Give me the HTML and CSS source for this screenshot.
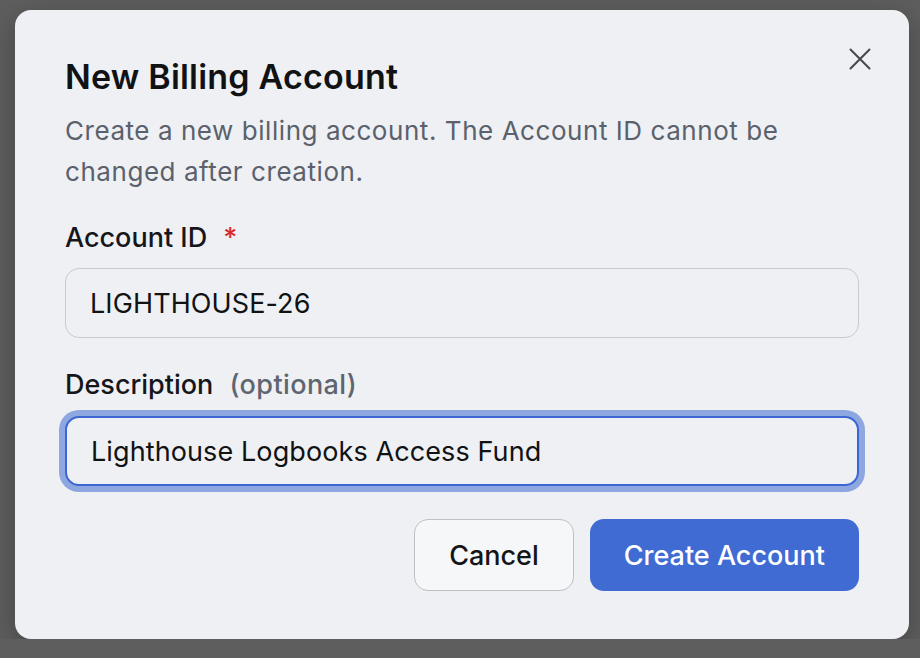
FILE: index.html
```html
<!DOCTYPE html>
<html>
<head>
    <link rel="stylesheet" href="styles.css">
</head>
<body>
    <div class="dialog">
        <button class="close-button" aria-label="Close">
            <svg width="22" height="22" viewBox="0 0 22 22">
                <path d="M1.5 1.5 L20.5 20.5 M20.5 1.5 L1.5 20.5" stroke="#474a4f" stroke-width="2.1" stroke-linecap="round" fill="none"/>
            </svg>
        </button>

        <div class="dialog-title">New Billing Account</div>
        <p class="dialog-text">Create a new billing account. The Account ID cannot be changed after creation.</p>

        <label class="field-label" for="accountId">Account ID <span class="required">*</span></label>
        <input id="accountId" class="field-input" type="text" value="LIGHTHOUSE-26">

        <label class="field-label label-gap" for="description">Description <span class="optional">(optional)</span></label>
        <input id="description" class="field-input focused" type="text" value="Lighthouse Logbooks Access Fund">

        <div class="dialog-actions">
            <button class="btn btn-cancel">Cancel</button>
            <button class="btn btn-primary">Create Account</button>
        </div>
    </div>
</body>
</html>
```

FILE: styles.css
```css
body {
    background-color: #5e5e5e;
    font-family: Inter, "Noto Sans", sans-serif;
    margin: 0;
    padding: 10px 11px 0 15px;
    overflow: hidden;
}

.dialog {
    position: relative;
    background-color: #eef0f3;
    border-radius: 16px;
    padding: 47px 50px 48px 50px;
    display: flex;
    flex-direction: column;
    box-shadow: 0 8px 28px rgba(0, 0, 0, 0.28);
}

.close-button {
    position: absolute;
    top: 38px;
    right: 38px;
    background: none;
    border: none;
    padding: 0;
    width: 22px;
    height: 22px;
    cursor: pointer;
}

.dialog-title {
    font-size: 34px;
    font-weight: 600;
    line-height: 40px;
    letter-spacing: 0.2px;
    color: #111214;
}

.dialog-text {
    font-size: 26px;
    line-height: 41px;
    letter-spacing: 0.55px;
    color: #5a616c;
    margin: 13px 0 30px 0;
}

.field-label {
    font-size: 27px;
    font-weight: 500;
    line-height: 32px;
    color: #151619;
    margin-bottom: 14px;
}

.label-gap {
    margin-top: 31px;
    margin-bottom: 15px;
}

.required {
    color: #d82c2c;
    margin-left: 9px;
}

.optional {
    color: #5f6570;
    font-weight: 500;
    letter-spacing: 0.4px;
    margin-left: 9px;
}

.field-input {
    height: 70px;
    box-sizing: border-box;
    border: 1.5px solid #c9cad1;
    border-radius: 14px;
    background-color: #eef0f3;
    padding: 0 24px;
    font-family: Inter, "Noto Sans", sans-serif;
    font-size: 27px;
    letter-spacing: 0.1px;
    color: #111214;
    outline: none;
}

.field-input.focused {
    border: 2px solid #3b66d4;
    box-shadow: 0 0 0 6px #8ea7e0;
}

.dialog-actions {
    display: flex;
    justify-content: flex-end;
    gap: 16px;
    margin-top: 33px;
}

.btn {
    height: 72px;
    border-radius: 14px;
    font-family: Inter, "Noto Sans", sans-serif;
    font-size: 27px;
    font-weight: 500;
    padding: 0 34px;
    cursor: pointer;
}

.btn-cancel {
    background-color: #f6f7f9;
    color: #141518;
    border: 1.5px solid #bfc0c6;
}

.btn-primary {
    background-color: #3f6bd3;
    color: #ffffff;
    border: none;
}
```
